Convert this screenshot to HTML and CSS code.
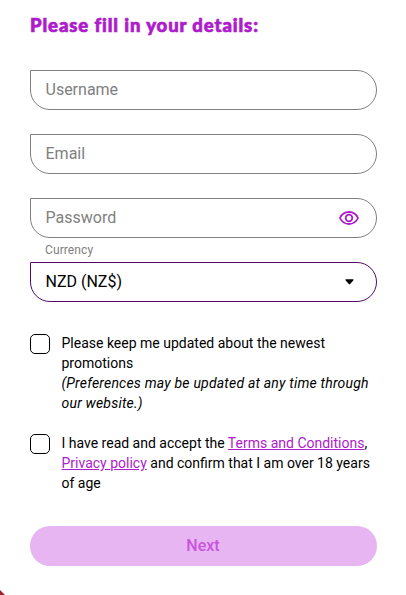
FILE: index.html
```
<!DOCTYPE html>
<html lang="en">
<head>
  <meta charset="UTF-8" />
  <meta name="viewport" content="width=device-width, initial-scale=1.0"/>
  <title>Sign up</title>
  <link rel="stylesheet" href="styles.css">
</head>
<body>

  <form class="signup-form">
    <h2>Please fill in your details:</h2>

    <div class="field">
      <input type="text" name="username" placeholder="Username" />
    </div>

    <div class="field">
      <input type="email" name="email" placeholder="Email" />
    </div>

    <div class="field">
      <input type="password" name="password" placeholder="Password" />
      <svg class="eye" viewBox="0 0 20 14" width="20" height="14">
        <path d="M1 7C2.7 3.2 6 1 10 1s7.300 2.200 9 6c-1.700 3.800-5 6-9 6S2.700 10.800 1 7z"/>
        <circle cx="10" cy="7" r="3.300"/>
      </svg>
    </div>

    <label class="currency-label">Currency</label>
    <div class="field currency">
      <span>NZD (NZ$)</span>
      <svg class="arrow" viewBox="0 0 10 6" width="9" height="6">
        <path d="M1.200 0h7.600c.6 0 .9.7.4 1.200L5.700 5.200c-.4.4-1 .4-1.400 0L.8 1.200C.3.700.6 0 1.200 0z"/>
      </svg>
    </div>

    <label class="check-row promo">
      <input type="checkbox" name="promotions" />
      <span>Please keep me updated about the newest promotions<br><em>(Preferences may be updated at any time through our website.)</em></span>
    </label>

    <label class="check-row">
      <input type="checkbox" name="terms" />
      <span>I have read and accept the <a href="#">Terms and Conditions</a>, <a href="#">Privacy policy</a> and confirm that I am over 18 years of age</span>
    </label>

    <button type="submit" disabled>Next</button>
  </form>

  <div class="corner"></div>

</body>
</html>
```
FILE: styles.css
```
* {
  box-sizing: border-box;
}

body {
  font-family: Roboto, sans-serif;
  background: #fff;
  color: #000;
  margin: 0;
  height: 595px;
  overflow: hidden;
  position: relative;
}

.signup-form {
  width: 347px;
  margin-left: 30px;
  padding-top: 10px;
}

h2 {
  margin: 0 0 30px;
  font-family: Lato, sans-serif;
  font-size: 18.5px;
  font-weight: 900;
  line-height: 30px;
  letter-spacing: 0.9px;
  color: #ae1bcb;
  -webkit-text-stroke: 0.7px #ae1bcb;
  white-space: nowrap;
}

.field {
  display: flex;
  align-items: center;
  justify-content: space-between;
  height: 40px;
  margin-bottom: 24px;
  padding: 0 17px 0 14.5px;
  border: 1px solid #808080;
  border-radius: 0 20px 20px 20px;
}

.field input {
  flex: 1;
  min-width: 0;
  padding: 0 0 2px;
  border: none;
  outline: none;
  background: none;
  font-family: inherit;
  font-size: 16px;
}

.field input::placeholder {
  color: #808080;
}

.eye {
  fill: none;
  stroke: #ae1bcb;
  stroke-width: 1.8;
}

.currency-label {
  display: block;
  height: 24px;
  margin-top: -24px;
  padding-left: 15px;
  font-size: 12px;
  line-height: 24px;
  letter-spacing: 0.1px;
  color: #808080;
}

.currency {
  margin-bottom: 31px;
  padding-right: 22px;
  border-color: #520a67;
  font-size: 16px;
}

.currency span {
  padding-bottom: 2px;
}

.check-row {
  display: flex;
  align-items: flex-start;
  font-size: 14px;
  line-height: 20px;
}

.check-row em {
  letter-spacing: 0.2px;
}

.promo {
  margin-bottom: 20px;
}

.check-row input {
  appearance: none;
  flex: none;
  width: 20px;
  height: 20px;
  margin: 1px 11.5px 0 0;
  border: 1px solid #000;
  border-radius: 5px;
}

.check-row a {
  color: #ae1bcb;
}

button {
  display: block;
  width: 100%;
  height: 40px;
  margin-top: 33px;
  padding: 0 1px 2px 0;
  border: none;
  border-radius: 20px;
  background: #e7b5f1;
  color: #c854df;
  font-family: inherit;
  font-size: 16px;
  font-weight: 500;
}

/* edge of the badge under the form */
.corner {
  position: absolute;
  left: 0;
  bottom: 0;
  width: 5px;
  height: 5px;
  background: #a3202d;
  clip-path: polygon(0 0, 100% 100%, 0 100%);
}
```
